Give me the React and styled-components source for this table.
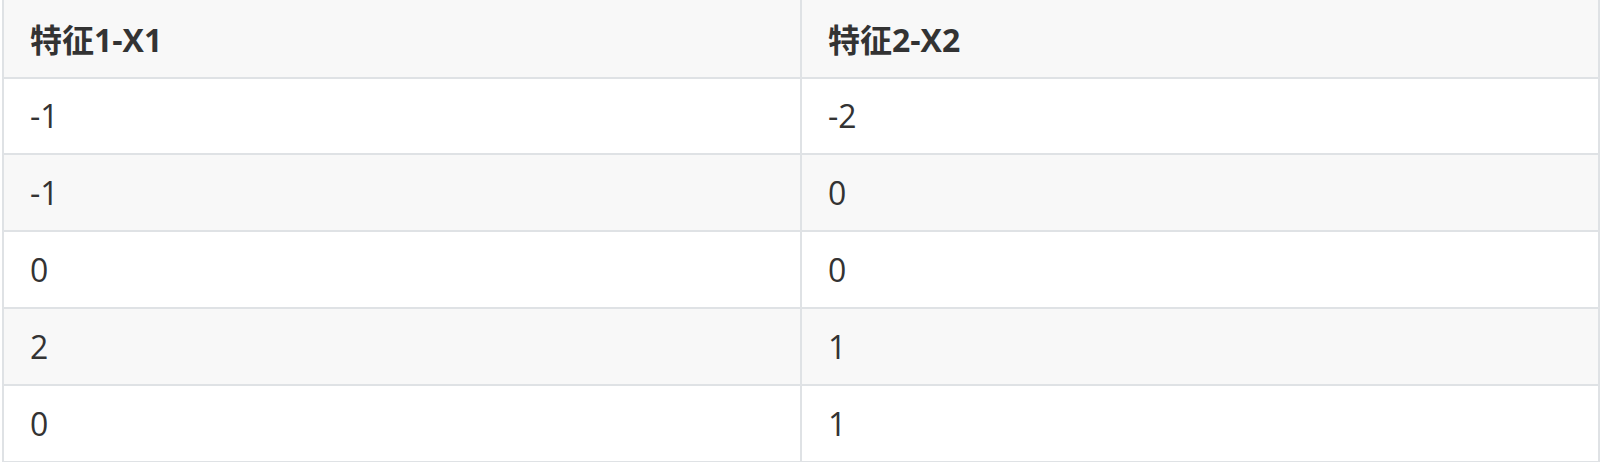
import React from "react";
import styled, { createGlobalStyle } from "styled-components";

const Global = createGlobalStyle`
  html, body { margin: 0; padding: 0; background: #ffffff; }
  body {
    font-family: "Open Sans", "Noto Sans CJK SC", sans-serif;
    color: #333333;
    overflow: hidden;
  }
`;

const Page = styled.div`
  padding-left: 2px;
  margin-top: -2px;
`;

const Table = styled.table`
  width: 1598px;
  border-collapse: collapse;
  table-layout: fixed;
  font-size: 32px;
  line-height: 51px;
`;

const HeadCell = styled.th`
  text-align: left;
  font-weight: 700;
  padding: 14px 26px 12px;
  border: 2px solid #dfe2e5;
  background: #f8f8f8;
`;

const Row = styled.tr`
  background: ${(p) => (p.$striped ? "#f8f8f8" : "#ffffff")};
`;

const Cell = styled.td`
  padding: ${(p) => (p.$first ? "11px 26px 12px" : "12px 26px")};
  border: 2px solid #dfe2e5;
  white-space: nowrap;
`;

const rows = [
  ["-1", "-2"],
  ["-1", "0"],
  ["0", "0"],
  ["2", "1"],
  ["0", "1"],
];

export default function App() {
  return (
    <>
      <Global />
      <Page>
        <Table>
          <thead>
            <tr>
              <HeadCell>特征1-X1</HeadCell>
              <HeadCell>特征2-X2</HeadCell>
            </tr>
          </thead>
          <tbody>
            {rows.map((r, i) => (
              <Row key={i} $striped={i % 2 === 1}>
                <Cell $first={i === 0}>{r[0]}</Cell>
                <Cell $first={i === 0}>{r[1]}</Cell>
              </Row>
            ))}
          </tbody>
        </Table>
      </Page>
    </>
  );
}
